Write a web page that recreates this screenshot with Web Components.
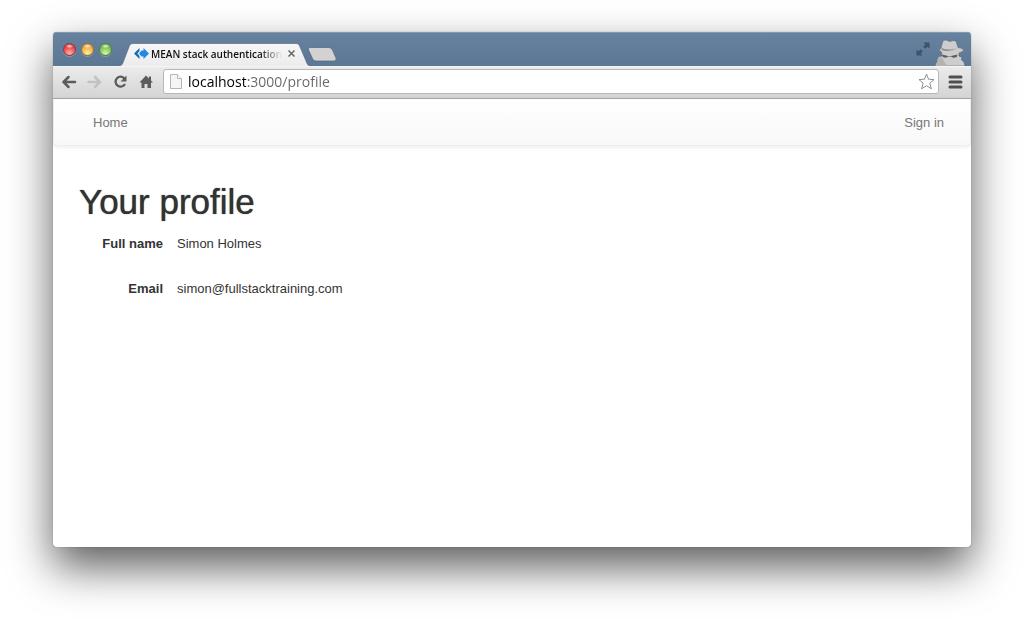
<!DOCTYPE html>
<html lang="en">
<head>
<meta charset="utf-8">
<title>MEAN stack authentication</title>
<style>
html { background: #fff; }
body { margin: 0; font-family: "Liberation Sans", Arial, sans-serif; color: #333; }
</style>
</head>
<body>
<browser-window>
  <browser-tabs slot="tabs">MEAN stack authentication</browser-tabs>
  <browser-toolbar slot="toolbar" url="localhost:3000/profile"></browser-toolbar>
  <site-nav>
    <nav-link slot="left" href="#home">Home</nav-link>
    <nav-link slot="right" href="#signin">Sign in</nav-link>
  </site-nav>
  <user-profile>
    <span slot="name">Simon Holmes</span>
    <span slot="email">simon@fullstacktraining.com</span>
  </user-profile>
</browser-window>
<script>
const define = (name, html, setup) => {
  const template = document.createElement("template");
  template.innerHTML = html;
  customElements.define(name, class extends HTMLElement {
    constructor() {
      super();
      this.attachShadow({ mode: "open" }).append(template.content.cloneNode(true));
    }
    connectedCallback() { if (setup) setup(this, this.shadowRoot); }
  });
};

define("browser-window", `
<style>
:host { display: block; padding: 32px 53px 73px; }
.window { display: flex; flex-direction: column; min-height: calc(100vh - 105px); border-radius: 4px; background: #fff; box-shadow: 0 0 1px rgba(0,0,0,.5), 0 20px 44px rgba(0,0,0,.64); overflow: hidden; }
</style>
<div class="window">
  <slot name="tabs"></slot>
  <slot name="toolbar"></slot>
  <slot></slot>
</div>`);

define("traffic-lights", `
<style>
:host { display: flex; gap: 5px; }
button { width: 13px; height: 13px; padding: 0; border: 1px solid var(--edge); border-radius: 50%; background: radial-gradient(ellipse 4px 2px at 50% 20%, #fffd, #fff0), radial-gradient(circle at 50% 85%, var(--light), var(--main) 70%); box-shadow: 0 1px 0 #ffffff40; }
.close { --edge: #8c3a42; --light: #ffb0a8; --main: #e8383c; }
.min { --edge: #957044; --light: #fff09a; --main: #eda23c; }
.max { --edge: #55803f; --light: #d5f5a0; --main: #6fb94f; }
</style>
<button class="close" aria-label="Close"></button>
<button class="min" aria-label="Minimize"></button>
<button class="max" aria-label="Zoom"></button>`);

define("browser-tabs", `
<style>
:host { display: flex; align-items: flex-end; height: 34px; background: linear-gradient(#67839f, #5b7794); box-shadow: inset 0 1px 0 #8299b0; font: 600 10px/14px "Open Sans", "Noto Sans", sans-serif; color: #111; }
traffic-lights { align-self: flex-start; padding: 11px 0 0 10px; }
.tab { position: relative; display: flex; align-items: center; gap: 2px; width: 192px; height: 23px; box-sizing: border-box; margin-left: 7px; padding: 0 15px 2px 15px; }
.shape { position: absolute; inset: 0; z-index: 0; }
.icon, .title, .tab button { position: relative; }
.icon { flex: none; }
.title { flex: 1; min-width: 0; overflow: hidden; white-space: nowrap; -webkit-mask-image: linear-gradient(to right, #000 calc(100% - 22px), transparent); }
.tab button { width: 9px; height: 9px; padding: 0; border: 0; background: none; display: flex; margin-left: 3px; }
.new { width: 30px; height: 15px; padding: 0; border: 0; background: none; margin: 0 auto 4px -4px; }
.full { margin: 0 4px 10px 0; }
.spy { margin: 0 5px 0 0; }
svg { display: block; }
</style>
<traffic-lights></traffic-lights>
<div class="tab">
  <svg class="shape" width="192" height="23" viewBox="0 0 192 23"><defs><linearGradient id="t" x2="0" y2="1"><stop stop-color="#f7f7f7"/><stop offset="1" stop-color="#ececec"/></linearGradient></defs><path d="M0 23C3 23 4 20 5 17L10 4C11 1 12 .5 15 .5H176C179 .5 180 1 181 4L187 18C188 21 189 23 192 23Z" fill="url(#t)"/><path d="M0 23C3 23 4 20 5 17L10 4C11 1 12 .5 15 .5H176C179 .5 180 1 181 4L187 18C188 21 189 23 192 23" fill="none" stroke="#4c6580" stroke-opacity=".6"/></svg>
  <svg class="icon" width="15" height="11" viewBox="0 0 15 11"><path d="M5.500 0V3L3.500 5.500 5.500 8V11L0 5.500Z" fill="#176bb5"/><path d="M9.500 0 15 5.500 9.500 11V8.500H7.500L5 5.500 7.500 2.500H9.500Z" fill="#2088e6"/></svg>
  <span class="title"><slot></slot></span>
  <button aria-label="Close tab"><svg width="9" height="9" viewBox="0 0 9 9"><path d="M1.500 1.500 7.500 7.500M7.500 1.500 1.500 7.500" stroke="#666" stroke-width="1.500"/></svg></button>
</div>
<button class="new" aria-label="New tab"><svg width="30" height="15" viewBox="0 0 30 15"><path d="M3 .5H22Q24.500.5 25.500 3L29 11Q30 14 27 14H9Q6.500 14 5.500 11.500L1.500 3Q.5.5 3 .5Z" fill="#d2d2d2" stroke="#4e6781" stroke-opacity=".7"/></svg></button>
<svg class="full" width="14" height="14" viewBox="0 0 14 14"><path d="M7.500 .5H13.500V6.500L11.500 4.700 9.300 6.800 7.200 4.700 9.300 2.500ZM6.500 13.500H.5V7.500L2.500 9.300 4.700 7.200 6.800 9.300 4.700 11.500Z" fill="#3b536b"/></svg>
<svg class="spy" width="32" height="28" viewBox="0 0 32 28"><path d="M1 28 2 25 4 24 3 21 5 18.500 8 18 7.500 14 5 12 7 10 8.500 4Q9.500 1.500 12 2L16 3.500 19 2.500Q21.500 2 22.500 4.500L24 9.500Q29 10 29.500 12 29 14 25 15L25 18 28 19.500 27.500 22 30 24 31 28Z" fill="#cdcdcd" stroke="#53687d" stroke-opacity=".6"/><path d="M7.500 10Q15 13 24 10Q16 14.500 7.500 12Z" fill="#8c8c8c"/><path d="M2 28 4 20 8 19 10 23 13 28Z" fill="#b3b3b3"/><path d="M8 16.500 14 18H17L23.500 16.500Q23.500 19 21 19.500 18 20 17 18.500H14Q13 20 10.500 19.500 8 19 8 16.500Z" fill="#5c5c5c"/></svg>`);

define("browser-toolbar", `
<style>
:host { display: flex; align-items: center; height: 33px; box-sizing: border-box; padding: 0 8px 1px; background: linear-gradient(#ececec, #d4d4d4); border-bottom: 1px solid #a8a8a8; box-shadow: inset 0 1px 0 #f5f5f5; }
button { flex: none; padding: 0; border: 0; background: none; display: flex; }
.tools { display: flex; gap: 10px; margin-right: 8px; }
.box { flex: 1; min-width: 0; display: flex; align-items: center; height: 25px; box-sizing: border-box; padding: 0 3px 0 6px; gap: 6px; background: #fff; border: 1px solid #b8b8b8; border-radius: 3px; margin-right: 9px; }
input { flex: 1; min-width: 0; height: 22px; padding: 0; border: 0; outline: 0; font: 14px/22px "Open Sans", "Noto Sans", sans-serif; color: transparent; caret-color: #111; background: linear-gradient(to right, #000 58px, #666 58px); -webkit-background-clip: text; background-clip: text; }
svg { display: block; }
</style>
<div class="tools">
<button aria-label="Back"><svg width="16" height="16" viewBox="0 0 16 16"><path d="M14 8H2.500M7.500 3 2.500 8 7.500 13" fill="none" stroke="#5c5c5c" stroke-width="2.500" stroke-linecap="round"/></svg></button>
<button aria-label="Forward"><svg width="16" height="16" viewBox="0 0 16 16"><path d="M1.500 8H13M8 3 13 8 8 13" fill="none" stroke="#c2c2c2" stroke-width="2.500" stroke-linecap="round"/></svg></button>
<button aria-label="Reload"><svg width="16" height="16" viewBox="0 0 16 16"><path d="M11.500 4.500A5 5 0 1 0 12 10" fill="none" stroke="#5c5c5c" stroke-width="2.300"/><path d="M13.500 1.500V7.500H7.500Z" fill="#5c5c5c"/></svg></button>
<button aria-label="Home page"><svg width="16" height="16" viewBox="0 0 16 16"><path d="M7 1.500 10 4.500V2.500H12V6.500L14 8.500H12V14H8.500V10H5.500V14H2.500V8.500H.5Z" fill="#5c5c5c"/></svg></button>
</div>
<div class="box">
  <svg width="12" height="15" viewBox="0 0 12 15"><path d="M.5.5H7.500L11.500 4.500V14.500H.5Z" fill="#f5f5f5" stroke="#b5b5b5"/><path d="M7.500.5V4.500H11.500" fill="#fff" stroke="#b5b5b5"/></svg>
  <input type="text" aria-label="Address" spellcheck="false">
  <button aria-label="Bookmark"><svg width="17" height="17" viewBox="0 0 17 17"><path d="M8.500 1 10.500 6.200 16 6.600 11.800 10.200 13.400 15.800 8.500 12.700 3.600 15.800 5.200 10.200 1 6.600 6.500 6.200Z" fill="#fff" stroke="#8e8e8e" stroke-linejoin="round"/></svg></button>
</div>
<button aria-label="Menu"><svg width="15" height="14" viewBox="0 0 15 14"><path d="M2 2H13M2 7H13M2 12H13" stroke="#505050" stroke-width="3" stroke-linecap="round"/></svg></button>`,
(host, root) => { root.querySelector("input").value = host.getAttribute("url"); });

define("nav-link", `
<style>
:host { display: block; }
a { display: block; padding: 0 13px; font-size: 13px; line-height: 20px; color: #777; text-decoration: none; }
</style>
<a><slot></slot></a>`,
(host, root) => { root.querySelector("a").href = host.getAttribute("href"); });

define("site-nav", `
<style>
:host { display: block; }
nav { display: flex; justify-content: space-between; padding: 14px 13px 12px 26px; background: linear-gradient(#fff, #f8f8f8); border: 1px solid #ececec; border-top: 0; border-radius: 4px; box-shadow: 0 1px 4px rgba(0,0,0,.08); }
</style>
<nav><slot name="left"></slot><slot name="right"></slot></nav>`);

define("user-profile", `
<style>
:host { display: block; padding: 36px 26px; font-size: 13px; line-height: 20px; }
h1 { margin: 0; font-size: 35px; line-height: 40px; font-weight: 500; text-shadow: 0 0 1px #333; }
dl { display: grid; grid-template-columns: 84px 1fr; column-gap: 14px; row-gap: 25px; margin: 12px 0 0; }
dt { font-weight: 700; text-align: right; white-space: nowrap; }
dd { margin: 0; }
</style>
<h1>Your profile</h1>
<dl>
  <dt>Full name</dt><dd><slot name="name"></slot></dd>
  <dt>Email</dt><dd><slot name="email"></slot></dd>
</dl>`);
</script>
</body>
</html>
